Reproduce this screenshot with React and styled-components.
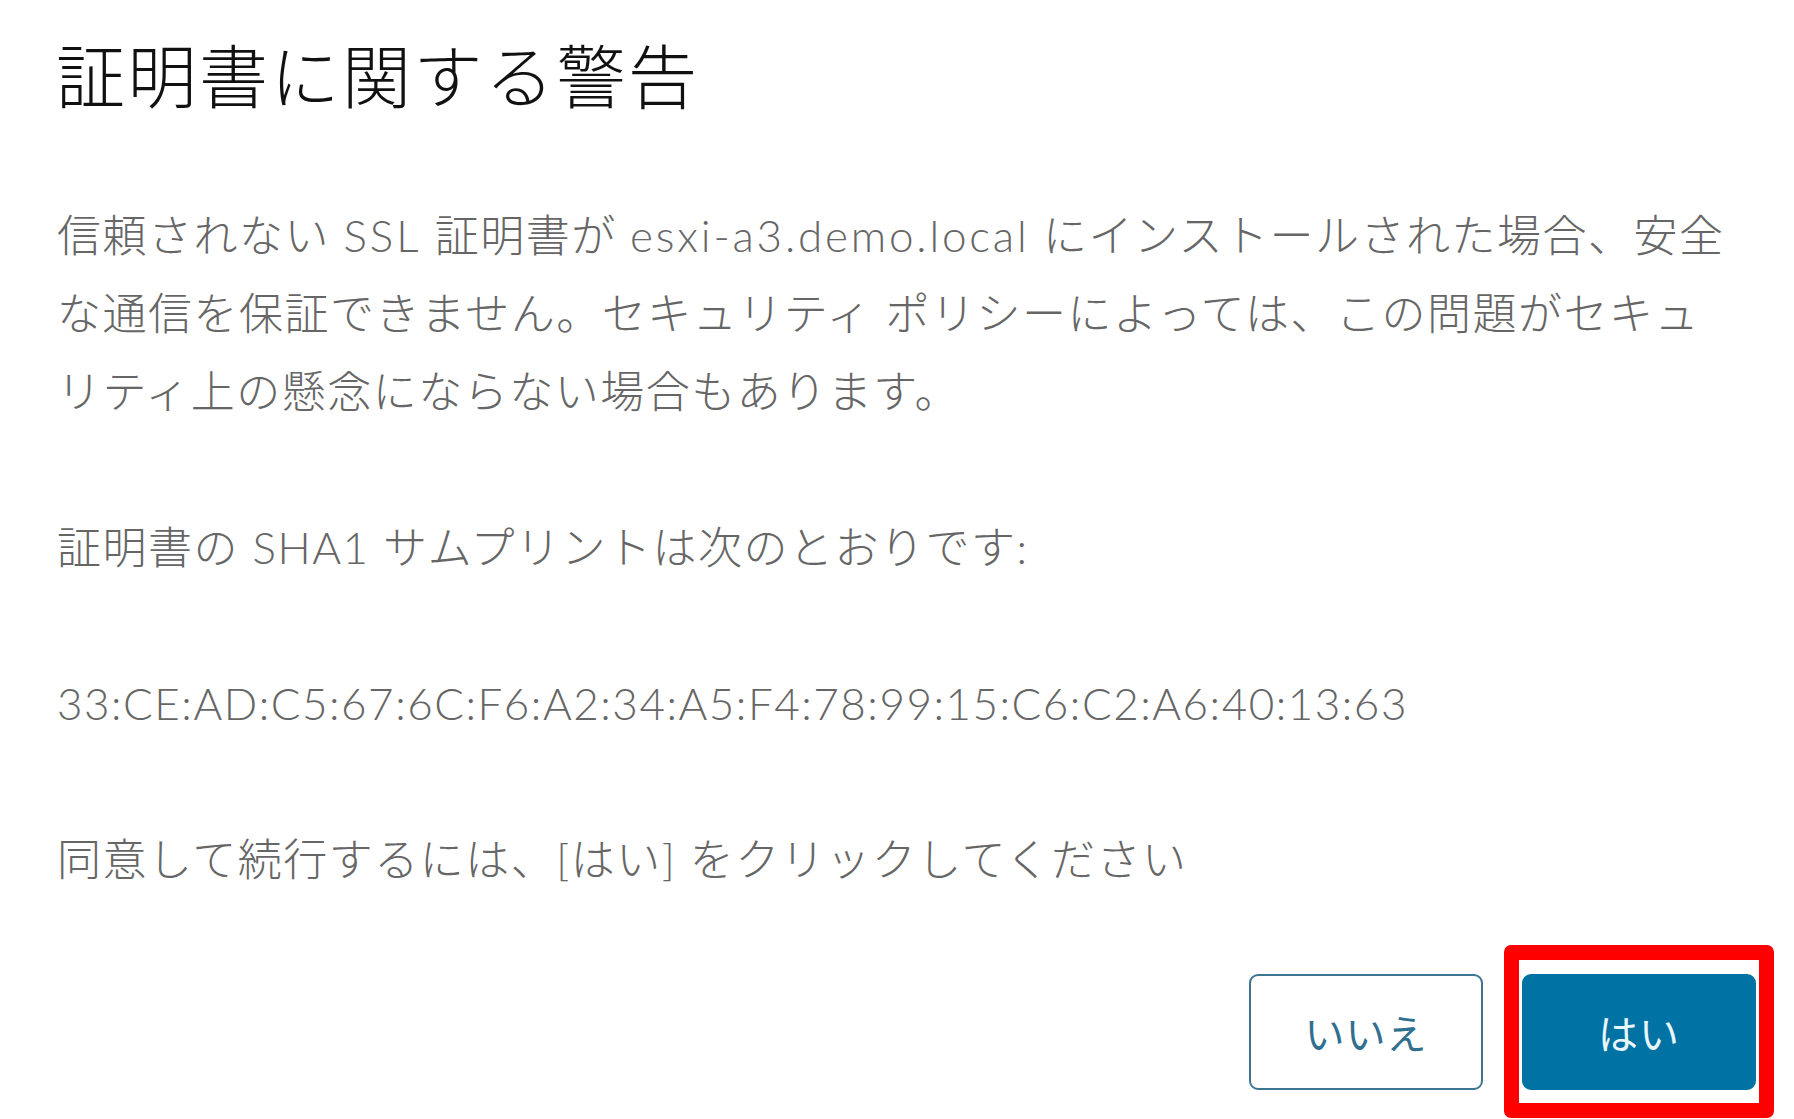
import React from "react";
import styled, { createGlobalStyle } from "styled-components";

const Global = createGlobalStyle`
  html, body { margin: 0; padding: 0; background: #ffffff; }
  body {
    font-family: "Lato", "Noto Sans CJK JP", sans-serif;
    -webkit-font-smoothing: antialiased;
  }
`;

const Dialog = styled.div`
  width: 1794px;
  height: 1119px;
  box-sizing: border-box;
  padding: 32px 40px 0 56px;
  display: flex;
  flex-direction: column;
  background: #fff;
  overflow: hidden;
`;

const Title = styled.h1`
  margin: 0;
  font-family: "Noto Sans CJK JP", sans-serif;
  font-weight: 300;
  font-size: 69px;
  line-height: 82px;
  letter-spacing: 2.5px;
  color: #111;
`;

const Body = styled.div`
  margin-top: 82px;
  padding-left: 1px;
  display: flex;
  flex-direction: column;
  gap: 78px;
`;

const Para = styled.p`
  margin: 0;
  font-family: "Lato", "Noto Sans CJK JP", sans-serif;
  font-weight: 300;
  font-size: 44px;
  line-height: 78px;
  letter-spacing: 1.5px;
  color: #666;
  white-space: nowrap;
`;

const Host = styled.span`
  letter-spacing: 2.8px;
`;

const Footer = styled.div`
  margin-top: 76px;
  display: flex;
  justify-content: flex-end;
  gap: 39px;
  margin-right: -2px;
`;

const Button = styled.button`
  position: relative;
  width: 234px;
  height: 116px;
  box-sizing: border-box;
  border-radius: 9px;
  font-family: "Noto Sans CJK JP", sans-serif;
  font-size: 40px;
  letter-spacing: 1px;
  cursor: pointer;
  border: 2px solid ${(p) => (p.$primary ? "#0072a3" : "#3d7593")};
  background: ${(p) => (p.$primary ? "#0072a3" : "#ffffff")};
  color: ${(p) => (p.$primary ? "#e9f7fc" : "#2f6f8f")};
`;

const Highlight = styled.span`
  position: absolute;
  left: -20px;
  right: -20px;
  top: -31px;
  bottom: -30px;
  border: 15px solid #ff0000;
  border-radius: 7px;
  pointer-events: none;
`;

export default function App() {
  return (
    <>
      <Global />
      <Dialog>
        <Title>証明書に関する警告</Title>
        <Body>
          <Para>
            信頼されない <Host>SSL</Host> 証明書が <Host>esxi-a3.demo.local</Host> にインストールされた場合、安全
            <br />
            な通信を保証できません。セキュリティ ポリシーによっては、この問題がセキュ
            <br />
            リティ上の懸念にならない場合もあります。
          </Para>
          <Para>証明書の SHA1 サムプリントは次のとおりです:</Para>
          <Para>33:CE:AD:C5:67:6C:F6:A2:34:A5:F4:78:99:15:C6:C2:A6:40:13:63</Para>
          <Para>同意して続行するには、[はい] をクリックしてください</Para>
        </Body>
        <Footer>
          <Button>いいえ</Button>
          <Button $primary>
            はい
            <Highlight />
          </Button>
        </Footer>
      </Dialog>
    </>
  );
}
